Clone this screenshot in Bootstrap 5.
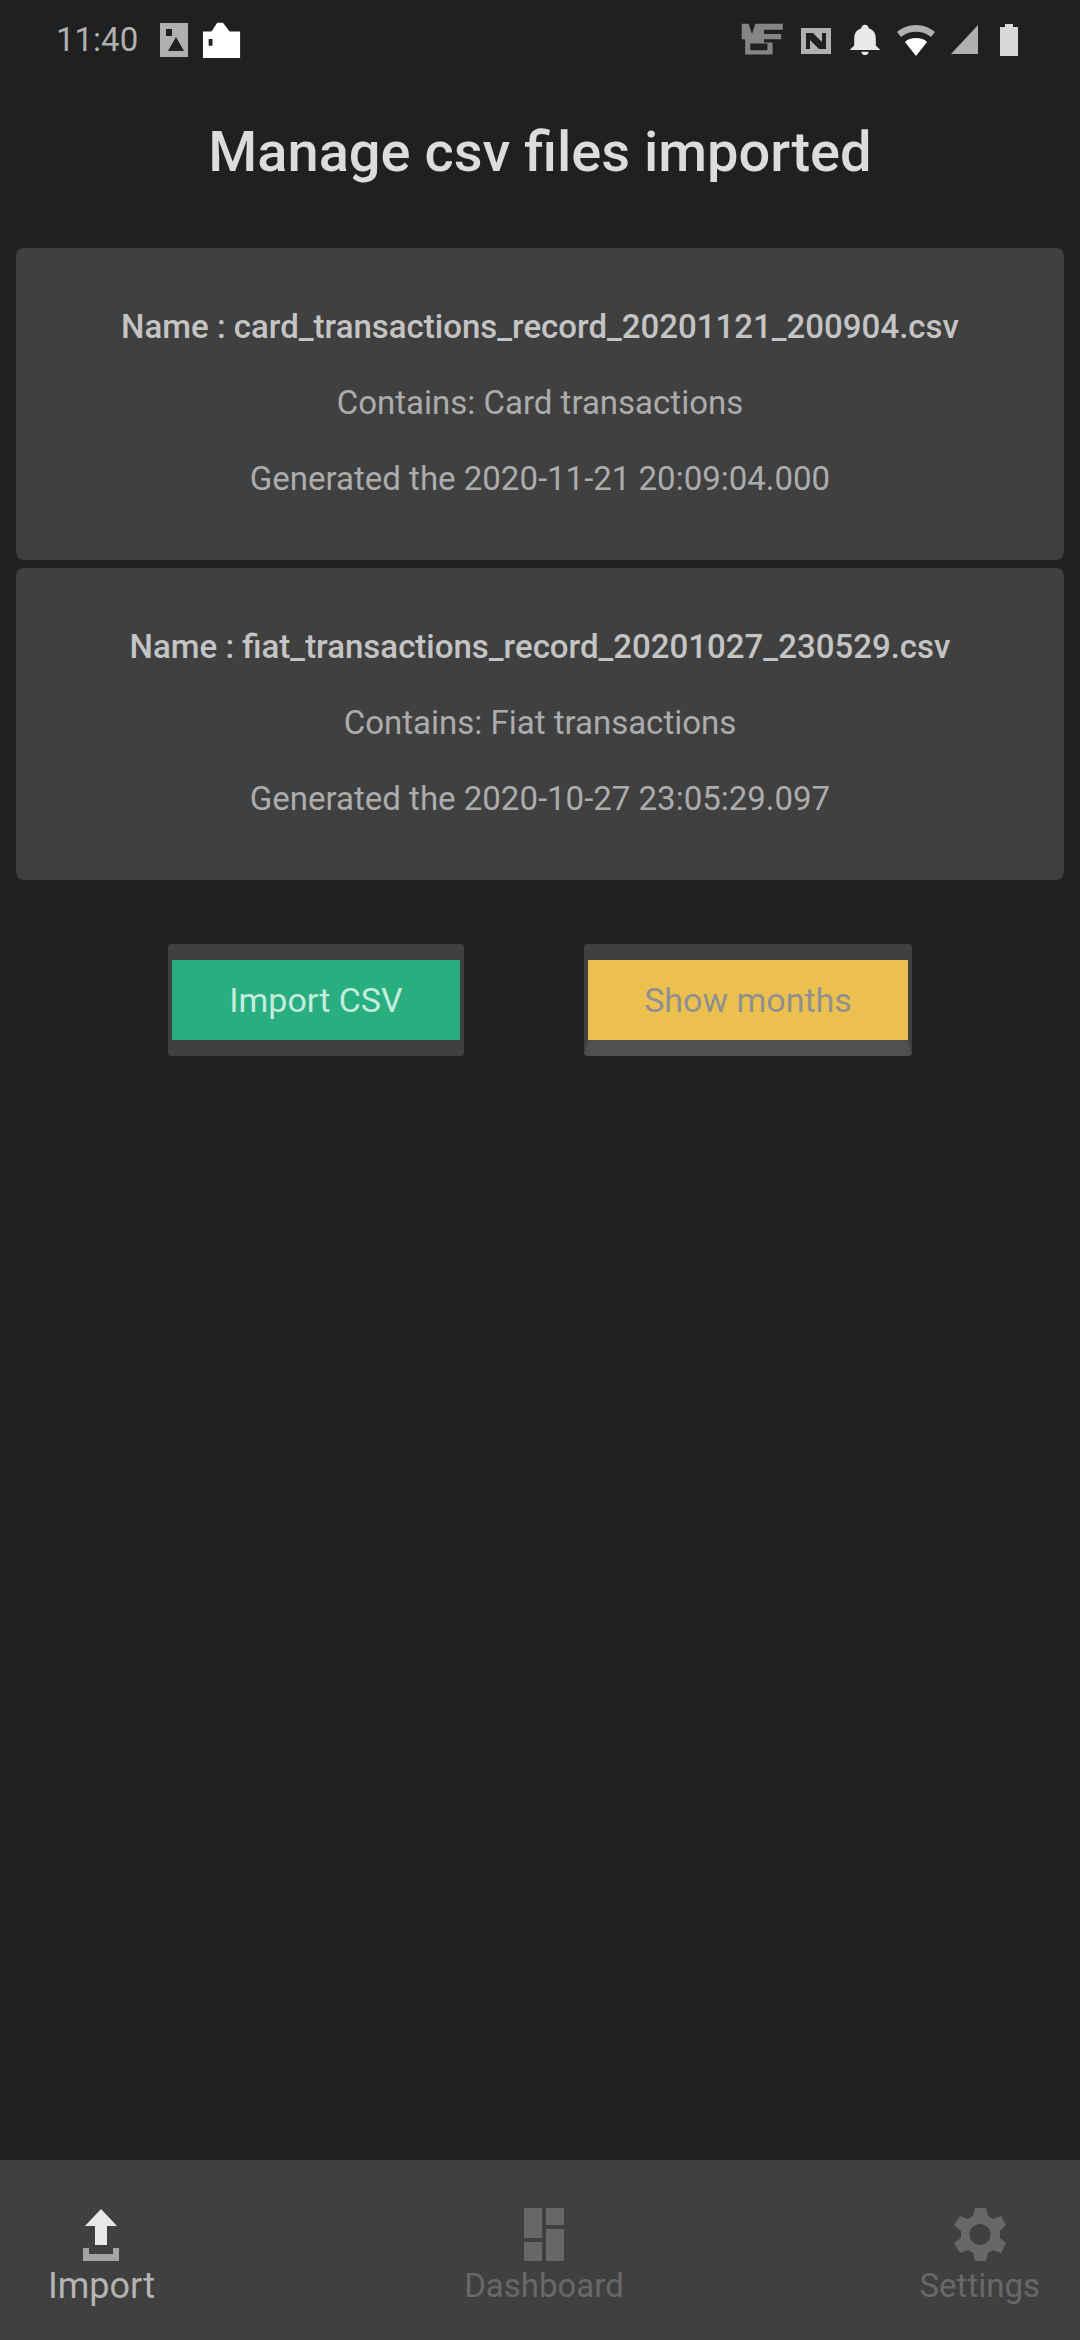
<!DOCTYPE html>
<html lang="en" data-bs-theme="dark">
<head>
<meta charset="utf-8">
<meta name="viewport" content="width=device-width, initial-scale=1">
<title>Manage csv files</title>
<link href="https://cdn.jsdelivr.net/npm/bootstrap@5.3.0/dist/css/bootstrap.min.css" rel="stylesheet">
<style>
body { background: #202020; color: #e0e0e0; font-family: Roboto, "Liberation Sans", sans-serif; }
.status-bar { height: 80px; padding: 0 56px; color: #b0b0b0; font-size: 33px; line-height: 40px; }
.status-bar svg { height: 36px; width: auto; fill: currentColor; }
.status-bar .status-app { height: 40px; }
.status-icons { gap: 13px; }
.bright { color: #fff; }
.page-title { font-size: 56px; line-height: 64px; font-weight: 500; margin: 40px 0 64px; color: #dcdcdc; }
.file-list { gap: 8px; padding: 0 16px; }
.file-card { background: #404040; border: 0; border-radius: 8px; padding: 41px 16px 43px; font-size: 33px; line-height: 76px; color: #acacac; }
.file-card .file-name { font-weight: 500; color: #c4c4c4; }
.actions { gap: 120px; margin-top: 64px; }
.action-btn { --bs-btn-color: #c4ecdc; --bs-btn-hover-color: #fff; border: 4px solid #404040; border-block-width: 16px; border-radius: 4px; height: 112px; padding: 0 48px; font-size: 34px; line-height: 40px; }
.import-btn { background: #28ae80; min-width: 296px; }
.show-btn { background: #ecc04e; --bs-btn-color: #909090; border-bottom-color: #505050; min-width: 328px; }
.bottom-nav { background: #404040; height: 180px; padding: 42px 40px 0 48px; }
.tab-link { color: #686868; text-decoration: none; font-size: 33px; line-height: 40px; }
.tab-link svg { width: 64px; height: 64px; fill: currentColor; }
.tab-link.active { color: #b4b4b4; font-size: 36px; }
.tab-link.active svg { color: #e8e8e8; }
.tab-cell { flex: 1 1 0; display: flex; }
</style>
</head>
<body class="min-vh-100 d-flex flex-column">
<header class="status-bar d-flex align-items-center justify-content-between">
  <div class="d-flex align-items-center">
    <time class="me-3">11:40</time>
    <svg class="me-2 status-app" viewBox="0 0 40 40" aria-hidden="true"><path fill-rule="evenodd" d="M6 3h28v34H6zM12 9v7h6V9zm10 8-8 14h16z"/></svg>
    <svg class="bright status-app" viewBox="0 0 42 42" aria-hidden="true"><path d="M1 12h9l6-9h6l7 9h11v28H1zM7 20v7h4v-7z" fill-rule="evenodd"/></svg>
  </div>
  <div class="status-icons d-flex align-items-center me-n4">
    <svg viewBox="0 0 52 42" aria-hidden="true"><path d="M2 2h8l4 12 4-12h32v7H28v5h20v6H28v4h10v14H6V20H2zM12 25v8h20v-8z" fill-rule="evenodd" opacity=".7"/></svg>
    <svg viewBox="0 0 36 36" aria-hidden="true"><path fill-rule="evenodd" d="M3 6h30v26H3zM8 11v16h4v-9l9 9h7V11h-4v9l-9-9z"/></svg>
    <svg class="bright" viewBox="0 0 40 40" aria-hidden="true"><path d="M20 3c3 0 4 2 4 4 6 2 8 6 8 12v7l5 5H3l5-5v-7c0-6 2-10 8-12 0-2 1-4 4-4zM16 33h8c0 5-8 5-8 0z" opacity=".9"/></svg>
    <svg viewBox="0 0 40 36" aria-hidden="true"><path d="M20 3C12 3 6 6 1 10l4 5c8-7 22-7 30 0l4-5C34 6 28 3 20 3z"/><path fill="#fff" d="M20 16c-5 0-8 1-11 4l11 14 11-14c-3-3-6-4-11-4z"/></svg>
    <svg viewBox="0 0 34 36" aria-hidden="true"><path d="M29 3v29H2z"/></svg>
    <svg viewBox="0 0 28 36" aria-hidden="true"><path fill="#d8d8d8" d="M9 2h8v3h5v29H4V5h5z"/></svg>
  </div>
</header>

<main class="flex-grow-1">
  <h1 class="page-title text-center">Manage csv files imported</h1>
  <section class="file-list d-flex flex-column">
    <article class="card file-card text-center">
      <div class="file-name">Name : card_transactions_record_20201121_200904.csv</div>
      <div>Contains: Card transactions</div>
      <div>Generated the 2020-11-21 20:09:04.000</div>
    </article>
    <article class="card file-card text-center">
      <div class="file-name">Name : fiat_transactions_record_20201027_230529.csv</div>
      <div>Contains: Fiat transactions</div>
      <div>Generated the 2020-10-27 23:05:29.097</div>
    </article>
  </section>
  <div class="actions d-flex justify-content-center">
    <button type="button" class="btn action-btn import-btn">Import CSV</button>
    <button type="button" class="btn action-btn show-btn">Show months</button>
  </div>
</main>

<nav class="bottom-nav d-flex" aria-label="Main">
  <div class="tab-cell justify-content-start"><a href="#" class="tab-link active d-flex flex-column align-items-center" aria-current="page">
    <svg viewBox="0 0 64 64" aria-hidden="true"><path d="M32 7 16 24h10v19h12V24h10z"/><path d="M14 46h6v6h24v-6h6v13H14z" opacity=".6"/></svg>
    <span>Import</span></a></div>
  <div class="tab-cell justify-content-center"><a href="#" class="tab-link d-flex flex-column align-items-center">
    <svg viewBox="0 0 64 64" aria-hidden="true"><path d="M12 6h18v30H12zM34 6h18v17H34zM12 40h18v19H12zM34 27h18v32H34z"/></svg>
    <span>Dashboard</span></a></div>
  <div class="tab-cell justify-content-end"><a href="#" class="tab-link d-flex flex-column align-items-center">
    <svg viewBox="0 0 64 64" aria-hidden="true"><path fill-rule="evenodd" d="m27 6-2 8-5 3-8-3-6 9 7 6v7l-7 5 6 10 8-3 5 3 2 8h11l2-8 5-3 8 3 5-10-6-5v-7l6-6-5-9-8 3-5-3-2-8zm5 16a10 10 0 1 1 0 21 10 10 0 0 1 0-21z"/></svg>
    <span>Settings</span></a></div>
</nav>
<script src="https://cdn.jsdelivr.net/npm/bootstrap@5.3.0/dist/js/bootstrap.bundle.min.js"></script>
</body>
</html>
